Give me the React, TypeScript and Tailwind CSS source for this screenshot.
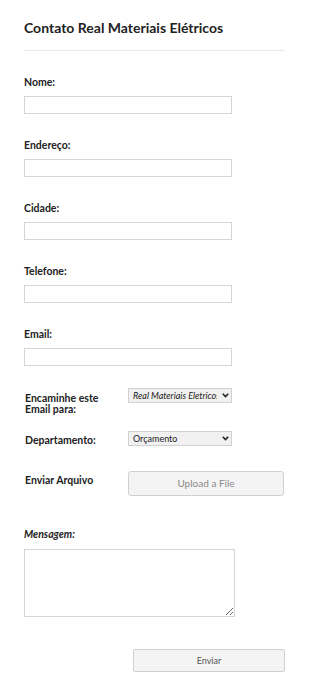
import React from "react";

const font = "font-['Comic_Sans_MS','Lato','Noto_Sans',sans-serif]";

const Field = ({ label }: { label: string }) => (
  <div className="flex flex-col">
    <label className="h-[12px] text-[10.5px] leading-[12px] font-bold text-[#222]">{label}</label>
    <input
      type="text"
      className="mt-[8px] block h-[18px] w-[208px] border border-[#d6d6d6] bg-white outline-none"
    />
  </div>
);

const FakeSelect = ({ value, italic }: { value: string; italic?: boolean }) => (
  <div className="relative h-[15px] w-[104px]">
    <select
      className={`block h-[15px] w-full appearance-none overflow-hidden border border-[#d0d0d0] bg-[#f1f1f1] pl-[4px] pr-[14px] text-[9px] leading-[13px] text-[#222] outline-none ${
        italic ? "italic" : ""
      }`}
      defaultValue={value}
    >
      <option>{value}</option>
    </select>
    <svg
      className="pointer-events-none absolute right-[3px] top-[5px]"
      width="7"
      height="5"
      viewBox="0 0 7 5"
    >
      <path d="M0.8 0.8 L3.5 3.6 L6.2 0.8" fill="none" stroke="#222" strokeWidth="1.6" />
    </svg>
  </div>
);

export default function App() {
  return (
    <div className={`min-h-[689px] w-[310px] bg-white px-[24px] ${font}`}>
      <h1 className="pt-[20px] text-[14px] leading-[16px] font-bold text-[#222]">
        Contato Real Materiais Elétricos
      </h1>
      <div className="mt-[14px] h-px w-[261px] bg-[#e8e8e8]" />

      <div className="mt-[25px] flex flex-col gap-[25px]">
        <Field label="Nome:" />
        <Field label="Endereço:" />
        <Field label="Cidade:" />
        <Field label="Telefone:" />
        <Field label="Email:" />
      </div>

      <div className="mt-[22px] flex items-start">
        <div className="w-[104px] pt-[5px] pl-px text-[10.5px] leading-[11px] font-bold text-[#222]">
          Encaminhe este
          <br />
          Email para:
        </div>
        <FakeSelect value="Real Materiais Eletricos" italic />
      </div>

      <div className="mt-[16px] flex items-start">
        <div className="w-[104px] pt-[4px] pl-px text-[10.5px] leading-[11px] font-bold text-[#222]">
          Departamento:
        </div>
        <FakeSelect value="Orçamento" />
      </div>

      <div className="mt-[25px] flex items-start">
        <div className="w-[104px] pt-[4px] pl-px text-[10.5px] leading-[11px] font-bold text-[#222]">
          Enviar Arquivo
        </div>
        <button className="h-[25px] w-[156px] rounded-[3px] border border-[#d0d0d0] bg-[#f4f4f4] text-[10px] text-[#888]">
          Upload a File
        </button>
      </div>

      <div className="mt-[32px] flex flex-col">
        <label className="h-[12px] text-[10.5px] leading-[12px] font-bold italic text-[#222]">
          Mensagem:
        </label>
        <textarea className="mt-[9px] block h-[68px] w-[211px] resize border border-[#d6d6d6] bg-white outline-none" />
      </div>

      <div className="mt-[32px] flex justify-end pr-px">
        <button className="h-[23px] w-[152px] rounded-[2px] border border-[#d0d0d0] bg-[#f4f4f4] text-[9px] text-[#555]">
          Enviar
        </button>
      </div>
    </div>
  );
}
